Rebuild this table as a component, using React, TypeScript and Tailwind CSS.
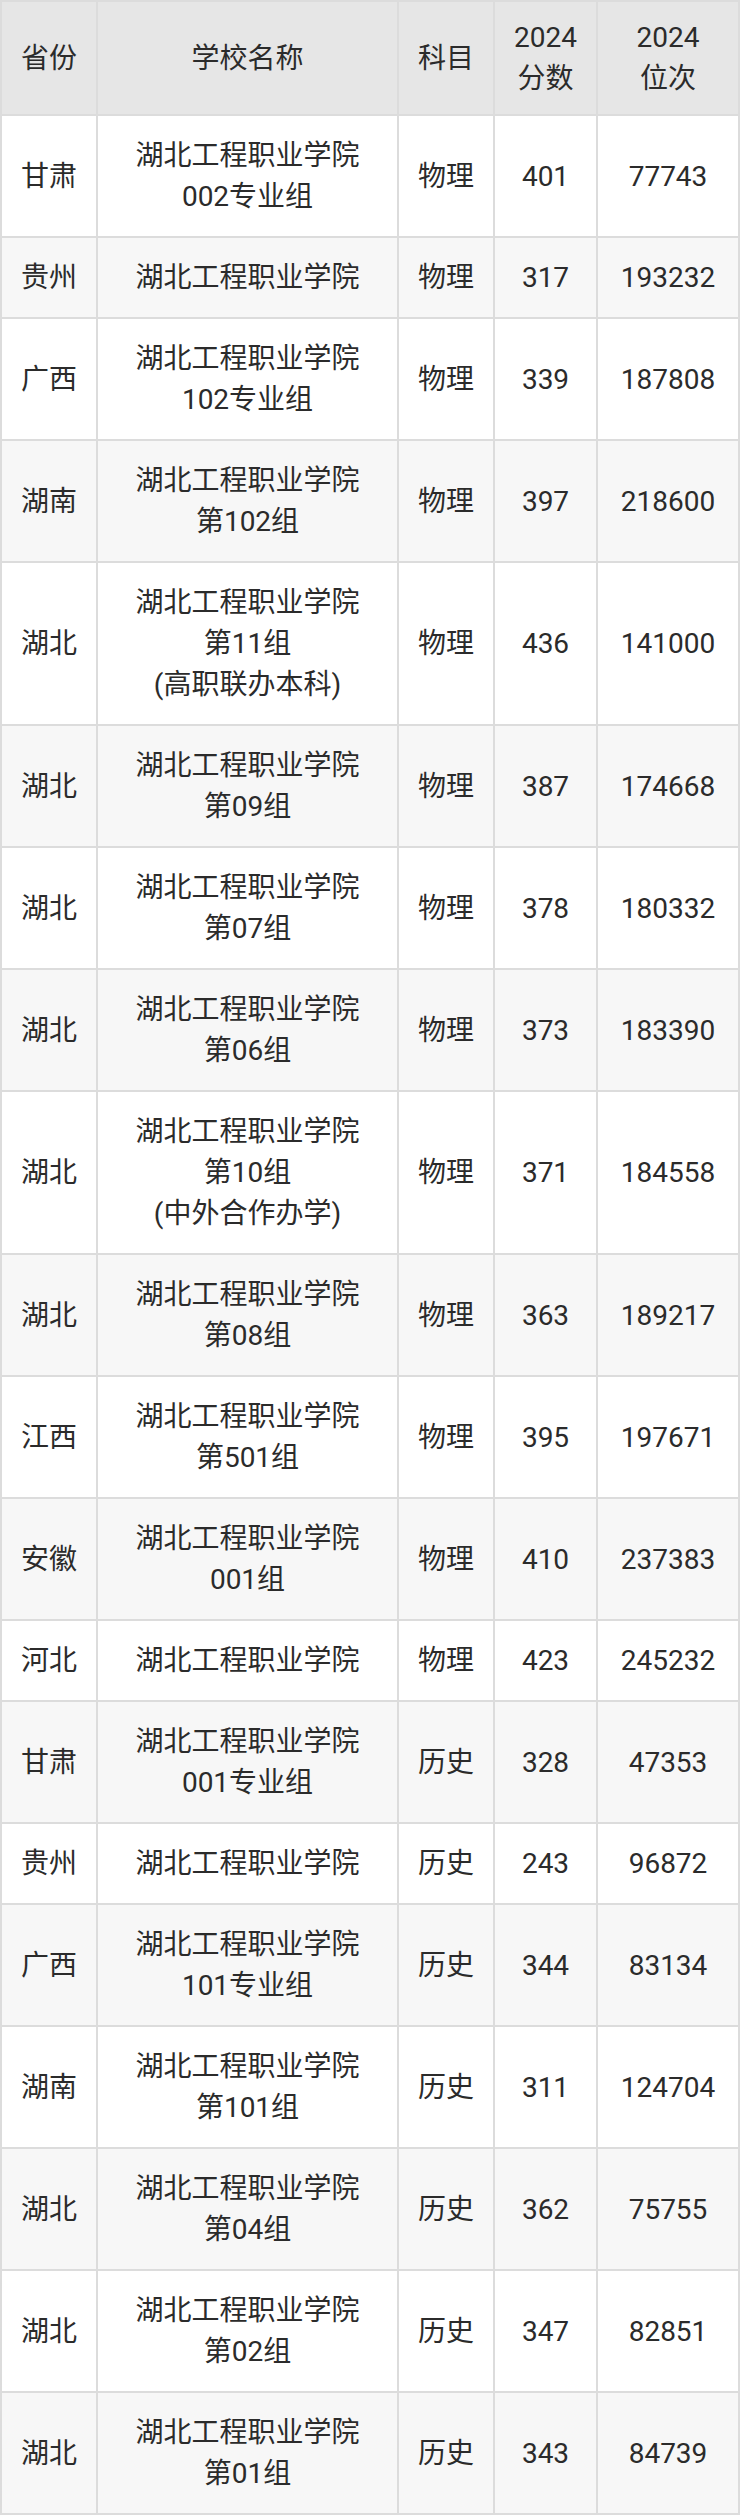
import React from 'react';

interface Row {
    province: string;
    school: string[];
    subject: string;
    score: string;
    rank: string;
}

const rows: Row[] = [
    { province: '甘肃', school: ['湖北工程职业学院', '002专业组'], subject: '物理', score: '401', rank: '77743' },
    { province: '贵州', school: ['湖北工程职业学院'], subject: '物理', score: '317', rank: '193232' },
    { province: '广西', school: ['湖北工程职业学院', '102专业组'], subject: '物理', score: '339', rank: '187808' },
    { province: '湖南', school: ['湖北工程职业学院', '第102组'], subject: '物理', score: '397', rank: '218600' },
    { province: '湖北', school: ['湖北工程职业学院', '第11组', '(高职联办本科)'], subject: '物理', score: '436', rank: '141000' },
    { province: '湖北', school: ['湖北工程职业学院', '第09组'], subject: '物理', score: '387', rank: '174668' },
    { province: '湖北', school: ['湖北工程职业学院', '第07组'], subject: '物理', score: '378', rank: '180332' },
    { province: '湖北', school: ['湖北工程职业学院', '第06组'], subject: '物理', score: '373', rank: '183390' },
    { province: '湖北', school: ['湖北工程职业学院', '第10组', '(中外合作办学)'], subject: '物理', score: '371', rank: '184558' },
    { province: '湖北', school: ['湖北工程职业学院', '第08组'], subject: '物理', score: '363', rank: '189217' },
    { province: '江西', school: ['湖北工程职业学院', '第501组'], subject: '物理', score: '395', rank: '197671' },
    { province: '安徽', school: ['湖北工程职业学院', '001组'], subject: '物理', score: '410', rank: '237383' },
    { province: '河北', school: ['湖北工程职业学院'], subject: '物理', score: '423', rank: '245232' },
    { province: '甘肃', school: ['湖北工程职业学院', '001专业组'], subject: '历史', score: '328', rank: '47353' },
    { province: '贵州', school: ['湖北工程职业学院'], subject: '历史', score: '243', rank: '96872' },
    { province: '广西', school: ['湖北工程职业学院', '101专业组'], subject: '历史', score: '344', rank: '83134' },
    { province: '湖南', school: ['湖北工程职业学院', '第101组'], subject: '历史', score: '311', rank: '124704' },
    { province: '湖北', school: ['湖北工程职业学院', '第04组'], subject: '历史', score: '362', rank: '75755' },
    { province: '湖北', school: ['湖北工程职业学院', '第02组'], subject: '历史', score: '347', rank: '82851' },
    { province: '湖北', school: ['湖北工程职业学院', '第01组'], subject: '历史', score: '343', rank: '84739' },
];

const cell = 'border-2 border-[#dcdcdc] px-1 py-[19px] text-center align-middle';
const head = 'border-2 border-[#dcdcdc] px-1 py-[15px] text-center align-middle font-normal';

const App: React.FC = () => {
    return (
        <div
            className="w-[740px] bg-white text-[#2b2b2b] text-[28px] leading-[41px]"
            style={{ fontFamily: 'Roboto, "Noto Sans CJK SC", sans-serif' }}
        >
            <table className="w-full table-fixed border-collapse">
                <colgroup>
                    <col className="w-[96px]" />
                    <col className="w-[301px]" />
                    <col className="w-[96px]" />
                    <col className="w-[103px]" />
                    <col />
                </colgroup>
                <thead className="bg-[#e6e6e6]">
                    <tr>
                        <th className={head}>省份</th>
                        <th className={head}>学校名称</th>
                        <th className={head}>科目</th>
                        <th className={head}>2024<br />分数</th>
                        <th className={head}>2024<br />位次</th>
                    </tr>
                </thead>
                <tbody>
                    {rows.map((r, i) => (
                        <tr key={i} className={i % 2 === 1 ? 'bg-[#f7f7f7]' : 'bg-white'}>
                            <td className={cell}>{r.province}</td>
                            <td className={cell}>
                                {r.school.map((line, j) => (
                                    <div key={j}>{line}</div>
                                ))}
                            </td>
                            <td className={cell}>{r.subject}</td>
                            <td className={cell}>{r.score}</td>
                            <td className={cell}>{r.rank}</td>
                        </tr>
                    ))}
                </tbody>
            </table>
        </div>
    );
};

export default App;
